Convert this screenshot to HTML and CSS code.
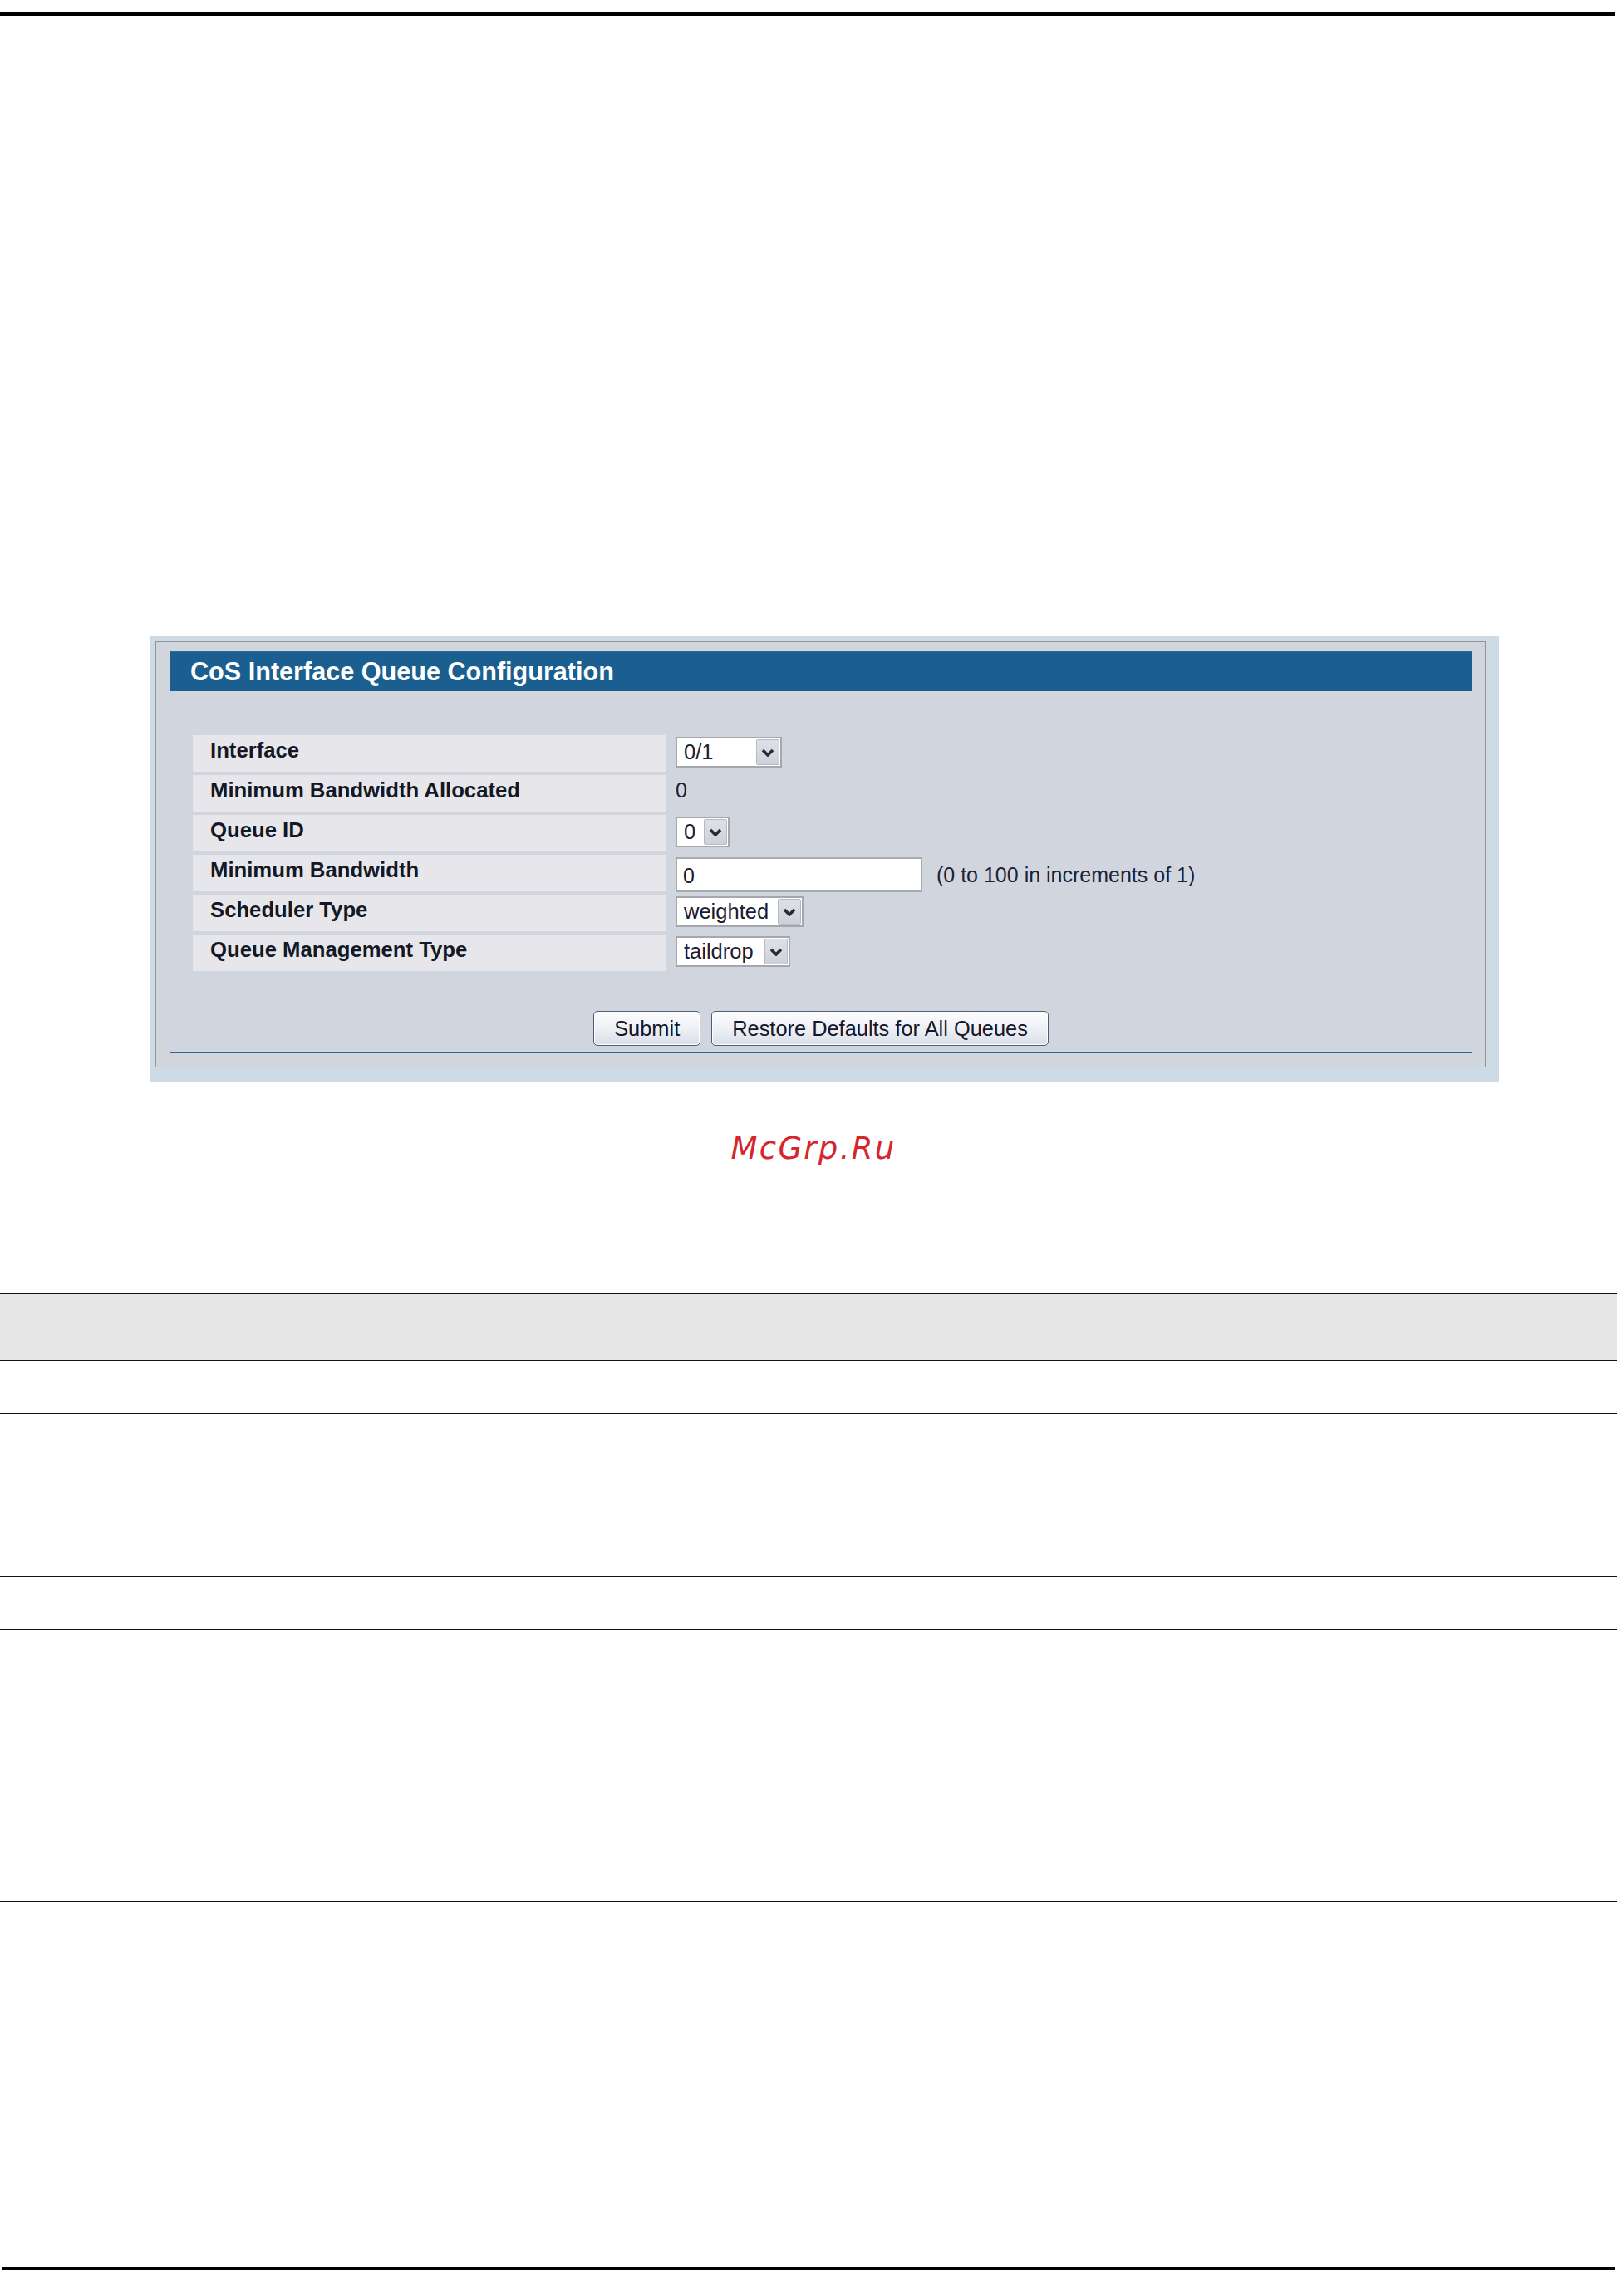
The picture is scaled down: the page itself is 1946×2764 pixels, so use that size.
FILE: index.html
```html
<!DOCTYPE html>
<html lang="en">
<head>
<meta charset="utf-8">
<title>CoS Interface Queue Configuration</title>
<link rel="stylesheet" href="styles.css">
</head>
<body>
<div class="rule-top"></div>

<div class="shot">
  <div class="frame">
    <div class="panel">
      <div class="panel-title">CoS Interface Queue Configuration</div>
      <div class="panel-body">
        <div class="form-grid">
          <div class="lbl">Interface</div>
          <div class="val val-ctl">
            <div class="select">
              <span class="sel-text w-iface">0/1</span>
              <span class="sel-btn"><svg viewBox="0 0 16 10" width="16" height="10"><polyline points="2,2 8,8 14,2" fill="none" stroke="#2b2b30" stroke-width="3.6" stroke-linejoin="miter"/></svg></span>
            </div>
          </div>

          <div class="lbl">Minimum Bandwidth Allocated</div>
          <div class="val val-text">0</div>

          <div class="lbl">Queue ID</div>
          <div class="val val-ctl">
            <div class="select">
              <span class="sel-text w-queue">0</span>
              <span class="sel-btn"><svg viewBox="0 0 16 10" width="16" height="10"><polyline points="2,2 8,8 14,2" fill="none" stroke="#2b2b30" stroke-width="3.6" stroke-linejoin="miter"/></svg></span>
            </div>
          </div>

          <div class="lbl">Minimum Bandwidth</div>
          <div class="val val-input">
            <input class="text-input" type="text" value="0">
            <span class="hint">(0 to 100 in increments of 1)</span>
          </div>

          <div class="lbl">Scheduler Type</div>
          <div class="val val-ctl">
            <div class="select">
              <span class="sel-text w-sched">weighted</span>
              <span class="sel-btn"><svg viewBox="0 0 16 10" width="16" height="10"><polyline points="2,2 8,8 14,2" fill="none" stroke="#2b2b30" stroke-width="3.6" stroke-linejoin="miter"/></svg></span>
            </div>
          </div>

          <div class="lbl">Queue Management Type</div>
          <div class="val val-ctl">
            <div class="select">
              <span class="sel-text w-qm">taildrop</span>
              <span class="sel-btn"><svg viewBox="0 0 16 10" width="16" height="10"><polyline points="2,2 8,8 14,2" fill="none" stroke="#2b2b30" stroke-width="3.6" stroke-linejoin="miter"/></svg></span>
            </div>
          </div>
        </div>

        <div class="actions">
          <button class="btn" type="button">Submit</button>
          <button class="btn" type="button">Restore Defaults for All Queues</button>
        </div>
      </div>
    </div>
  </div>
</div>

<div class="watermark">McGrp.Ru</div>

<div class="doc-table">
  <div class="doc-row doc-head"></div>
  <div class="doc-row doc-r1"></div>
  <div class="doc-row doc-r2"></div>
  <div class="doc-row doc-r3"></div>
  <div class="doc-row doc-r4"></div>
</div>

<div class="rule-bottom"></div>
</body>
</html>
```

FILE: styles.css
```css
html, body {
  margin: 0;
  padding: 0;
  background: #ffffff;
}

body {
  width: 1946px;
  font-family: "Liberation Sans", Arial, Helvetica, sans-serif;
  color: #15182a;
}

.rule-top {
  margin-top: 15px;
  height: 4px;
  margin-right: 3px;
  background: #000;
}

/* screenshot block */
.shot {
  margin-top: 747px;
  margin-left: 180px;
  width: 1624px;
  height: 537px;
  box-sizing: border-box;
  padding: 6px 16px 18px 7px;
  background: #cedbe5;
}

.frame {
  border: 1px solid #8f959d;
  background: #d1d5dc;
  padding: 11px 15px 16px 16px;
}

.panel {
  border: 1px solid #2c6898;
  background: #d0d5de;
}

.panel-title {
  height: 47px;
  line-height: 47px;
  padding-left: 24px;
  background: #1b5f91;
  color: #ffffff;
  font-size: 30.6px;
  font-weight: bold;
  white-space: nowrap;
}

.panel-body {
  padding: 53px 0 8px 27px;
}

.form-grid {
  display: grid;
  grid-template-columns: 570px 1fr;
  grid-auto-rows: 44px;
  row-gap: 4px;
  column-gap: 11px;
}

.lbl {
  background: #e7e7eb;
  padding: 4px 0 0 21px;
  font-size: 25.7px;
  line-height: 28px;
  font-weight: bold;
  color: #141826;
  white-space: nowrap;
}

.val {
  display: flex;
  align-items: flex-start;
  font-size: 25px;
}

.val-text {
  padding-top: 4px;
  line-height: 28px;
  color: #1c1f38;
}

.val-ctl {
  padding-top: 2px;
}

.val-input {
  padding-top: 3px;
  align-items: center;
  height: 42px;
}

/* custom select */
.select {
  display: flex;
  height: 37px;
  box-sizing: border-box;
  border: 2px solid #a4a7ad;
  background: #ffffff;
}

.sel-text {
  box-sizing: border-box;
  padding-left: 8px;
  line-height: 32px;
  font-size: 25.5px;
  color: #1b1c30;
  white-space: nowrap;
}

.w-iface { width: 94px; }
.w-queue { width: 31px; }
.w-sched { width: 120px; }
.w-qm { width: 104px; }

.sel-btn {
  width: 28px;
  margin: 1px;
  box-sizing: border-box;
  border: 1px solid #b7bac2;
  border-radius: 2px;
  background: linear-gradient(#dfe0e7, #cfd1da);
  display: flex;
  align-items: center;
  justify-content: center;
}

.sel-btn svg {
  display: block;
}

.text-input {
  box-sizing: border-box;
  width: 297px;
  height: 42px;
  margin: 0;
  border: 2px solid #a8abb1;
  background: #ffffff;
  padding: 2px 0 0 7px;
  font-family: "Liberation Sans", Arial, Helvetica, sans-serif;
  font-size: 25px;
  color: #1b1c30;
  outline: none;
}

.hint {
  margin-left: 17px;
  font-size: 25px;
  color: #1c1f38;
  white-space: nowrap;
}

.actions {
  display: flex;
  justify-content: center;
  gap: 13px;
  margin-top: 48px;
  padding-right: 27px;
}

.btn {
  box-sizing: border-box;
  height: 42px;
  margin: 0;
  padding: 0 24px;
  border: 1px solid #4d5f78;
  border-radius: 5px;
  background: linear-gradient(#fdfdfe 0%, #eef0f5 50%, #d9dee8 100%);
  box-shadow: inset 0 0 0 1px #ffffff;
  font-family: "Liberation Sans", Arial, Helvetica, sans-serif;
  font-size: 25.4px;
  line-height: 38px;
  color: #15172a;
  white-space: nowrap;
}

/* watermark */
.watermark {
  margin-top: 58px;
  padding-left: 12px;
  text-align: center;
  font-family: "DejaVu Sans", "Liberation Sans", sans-serif;
  font-style: oblique;
  font-size: 37px;
  line-height: 44px;
  letter-spacing: 2.3px;
  color: #d7262b;
}

/* empty document table */
.doc-table {
  margin-top: 152px;
  border-top: 1px solid #111;
}

.doc-row {
  border-bottom: 1px solid #111;
}

.doc-head {
  height: 79px;
  background: #e6e6e6;
}

.doc-r1 { height: 63px; }
.doc-r2 { height: 195px; }
.doc-r3 { height: 63px; }
.doc-r4 { height: 327px; }

.rule-bottom {
  margin-top: 439px;
  height: 4px;
  margin-left: 2px;
  margin-right: 3px;
  background: #000;
}
```
